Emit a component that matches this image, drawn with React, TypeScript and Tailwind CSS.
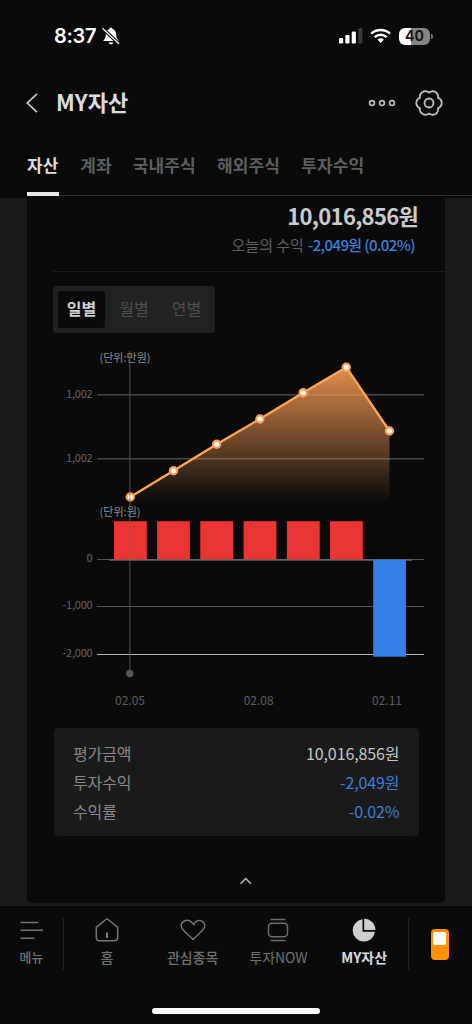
import React from 'react';

interface Point {
  x: number;
  y: number;
}

interface Bar {
  x: number;
  value: number;
}

const tabs = ['자산', '계좌', '국내주식', '해외주식', '투자수익'];

const periods = ['일별', '월별', '연별'];

const points: Point[] = [
  { x: 130.3, y: 497 },
  { x: 173.5, y: 470.7 },
  { x: 216.7, y: 444.3 },
  { x: 259.9, y: 419 },
  { x: 303.1, y: 392.7 },
  { x: 346.3, y: 367.3 },
  { x: 389.5, y: 431 },
];

const bars: Bar[] = [
  { x: 114, value: 809 },
  { x: 157.1, value: 809 },
  { x: 200.3, value: 809 },
  { x: 243.6, value: 809 },
  { x: 286.9, value: 809 },
  { x: 330, value: 809 },
  { x: 373.2, value: -2049 },
];

const summary = [
  { label: '평가금액', value: '10,016,856원', className: 'text-[#c4c6c8]' },
  { label: '투자수익', value: '-2,049원', className: 'text-[#3d7fdc]' },
  { label: '수익률', value: '-0.02%', className: 'text-[#3d7fdc]' },
];

// six-lobed outline of the settings icon
const gearOutline = Array.from({ length: 120 }, (_, i) => {
  const angle = (i * Math.PI) / 60;
  const radius = 10.4 + 2.3 * Math.abs(Math.cos(3 * angle)) ** 0.8;
  return `${(14 + radius * Math.cos(angle)).toFixed(2)},${(14 + radius * Math.sin(angle)).toFixed(2)}`;
}).join(' ');

const StatusBar: React.FC = () => (
  <div className="flex h-[72px] items-center justify-between pl-[54px] pr-[39px]">
    <div className="flex items-center gap-[5px]">
      <span className="w-[43px] whitespace-nowrap font-['Inter'] text-[20px] font-semibold leading-none tracking-[-0.3px] text-white">8:37</span>
      <svg width="18" height="18" viewBox="0 0 18 18">
        <path d="M9 .8c.8 0 1.4.5 1.5 1.2 2.3.7 3.7 2.7 3.7 5.2 0 3.5.8 4.5 2 5.6.6.7.3 1.3-.6 1.3H2.4c-.9 0-1.2-.6-.6-1.3 1.2-1.1 2-2.1 2-5.6 0-2.5 1.4-4.5 3.7-5.2C7.6 1.3 8.2.8 9 .8z" fill="#fff" />
        <path d="M6.6 15.4h4.8c-.3 1.1-1.2 1.8-2.4 1.8s-2.1-.7-2.4-1.8z" fill="#fff" />
        <path d="M1 1.7 16.7 16.5" stroke="#0a0a0a" strokeWidth="3.6" />
        <path d="M1 1.7 16.7 16.5" stroke="#fff" strokeWidth="1.3" strokeLinecap="round" />
      </svg>
    </div>
    <div className="flex items-center">
      <svg width="25" height="16" viewBox="0 0 25 16">
        <rect x="0" y="10" width="4.2" height="5.5" rx="1.2" fill="#fff" />
        <rect x="6.3" y="7" width="4.2" height="8.5" rx="1.2" fill="#fff" />
        <rect x="12.7" y="3.5" width="4.2" height="12" rx="1.2" fill="#fff" />
        <rect x="19.2" y="0" width="4.2" height="15.5" rx="1.2" fill="#3a3a3a" />
      </svg>
      <svg className="ml-[6px] mr-px" width="22" height="16" viewBox="0 0 22 16" fill="none" stroke="#fff" strokeWidth="2.5">
        <path d="M1.3 5.6a13.8 13.8 0 0 1 18.7 0" />
        <path d="M4.7 9.1a9 9 0 0 1 11.9 0" />
        <path d="M7.4 11.6a5 5 0 0 1 6.5 0L10.65 15z" fill="#fff" stroke="none" />
      </svg>
      <div className="ml-[6px] flex items-center gap-px">
        <div className="flex h-[17px] w-[31px] items-center justify-center rounded-[6px] bg-linear-to-r from-white from-40% to-[#848484] to-40% font-['Inter'] text-[14px] font-bold leading-none text-[#151515]">
          40
        </div>
        <div className="h-[5px] w-[2px] rounded-r-full bg-[#777]" />
      </div>
    </div>
  </div>
);

const Header: React.FC = () => (
  <header className="flex h-[62px] items-center pl-[26px] pr-[29px]">
    <svg width="12" height="20" viewBox="0 0 12 20" fill="none" stroke="#c8cacc" strokeWidth="1.7">
      <path d="M11 .8 1.3 10 11 19.2" />
    </svg>
    <h1 className="ml-[18px] whitespace-nowrap pb-[5px] text-[22px] font-bold leading-none tracking-[0.1px] text-[#dadcdf]">MY자산</h1>
    <svg className="ml-auto" width="28" height="8" viewBox="0 0 28 8" fill="none" stroke="#b9bbbd" strokeWidth="1.7">
      <circle cx="4" cy="4" r="2.4" />
      <circle cx="14" cy="4" r="2.4" />
      <circle cx="24" cy="4" r="2.4" />
    </svg>
    <svg className="ml-[19px]" width="28" height="28" viewBox="0 0 28 28" fill="none" stroke="#bfc1c3" strokeWidth="1.8" strokeLinejoin="round">
      <polygon points={gearOutline} />
      <circle cx="14" cy="14" r="4.5" />
    </svg>
  </header>
);

const TabBar: React.FC = () => (
  <nav className="mb-[2px] ml-[27px] flex h-[62px] gap-[21.2px] border-b border-[#2d2f2f]">
    {tabs.map((tab, index) => (
      <div
        key={tab}
        className={`flex h-[62px] items-center whitespace-nowrap text-[17px] font-bold leading-none tracking-[0.1px] ${
          index === 0 ? 'w-[32px] border-b-4 border-[#e4e6e9] pt-0.5 text-[#dadcdf]' : 'pb-0.5 text-[#5d5f60]'
        }`}
      >
        {tab}
      </div>
    ))}
  </nav>
);

const AssetChart: React.FC = () => {
  const line = points.map((p) => `${p.x},${p.y}`).join(' ');

  return (
    <svg className="block" width="418" height="379" viewBox="27 333 418 379">
      <defs>
        <linearGradient id="area" x1="0" y1="367" x2="0" y2="502" gradientUnits="userSpaceOnUse">
          <stop offset="0" stopColor="#ffa158" stopOpacity="0.88" />
          <stop offset="1" stopColor="#ffa158" stopOpacity="0" />
        </linearGradient>
      </defs>

      <path d="M97 394.7H424M97 458.7H424" stroke="#474747" strokeWidth="1.5" />
      <path d="M97 559.5H424M97 606.5H424" stroke="#555757" strokeWidth="1" />
      <path d="M97 654.5H424" stroke="#b4b6b6" strokeWidth="1" />
      <path d="M109.5 560H412" stroke="#666868" strokeWidth="1.6" />

      <polygon points={`${line} 389.5,502 130.3,502`} fill="url(#area)" />
      <polyline points={line} fill="none" stroke="#ffa656" strokeWidth="2.3" />
      {points.map((p) => (
        <circle key={p.x} cx={p.x} cy={p.y} r="3.6" fill="#fff" stroke="#ffa154" strokeWidth="2.2" />
      ))}

      {bars.map((bar) => (
        <rect
          key={bar.x}
          x={bar.x}
          y={bar.value > 0 ? 521.2 : 559.7}
          width="32.8"
          height={bar.value > 0 ? 38.2 : 97}
          fill={bar.value > 0 ? '#eb3434' : '#377fe8'}
        />
      ))}

      <g fontSize="11" fill="#626465" letterSpacing="-0.2">
        <text x="92.5" y="397.5" textAnchor="end">1,002</text>
        <text x="92.5" y="461.5" textAnchor="end">1,002</text>
        <text x="92.5" y="562" textAnchor="end">0</text>
        <text x="92.5" y="609" textAnchor="end">-1,000</text>
        <text x="92.5" y="657" textAnchor="end">-2,000</text>
      </g>
      <g fontSize="11" fill="#8b8d8e">
        <text x="99.5" y="362" textLength="51">(단위:만원)</text>
        <text x="99.5" y="516" textLength="41">(단위:원)</text>
      </g>
      <g fontSize="12" fill="#5c5e5f" textAnchor="middle">
        <text x="130" y="704.5">02.05</text>
        <text x="258.7" y="704.5">02.08</text>
        <text x="387" y="704.5">02.11</text>
      </g>

      <path d="M129.8 351V673" stroke="#686868" strokeOpacity="0.5" strokeWidth="1.5" />
      <circle cx="129.8" cy="673.5" r="3.7" fill="#555" />
    </svg>
  );
};

const AssetCard: React.FC = () => (
  <main className="flex h-[707px] justify-center bg-[#1a1a1a]">
    <section className="flex h-[705px] w-[418px] flex-col overflow-hidden rounded-b-[5px] bg-[#0a0a0a]">
      <div className="flex h-[73px] shrink-0 flex-col items-end pl-[26px]">
        <div className="mt-[6px] whitespace-nowrap pr-[27px] text-[22px] font-bold leading-[22px] tracking-[-0.7px] text-[#c9cbce]">10,016,856원</div>
        <div className="mt-[11px] flex gap-1 whitespace-nowrap pr-[30px] text-[15px] leading-[16px]">
          <span className="text-[#5e6061]">오늘의 수익</span>
          <span className="font-medium tracking-[-0.6px] text-[#3d7fdc]">-2,049원 (0.02%)</span>
        </div>
      </div>
      <div className="ml-[26px] h-px w-[392px] shrink-0 bg-[#1b1c1c]" />
      <div className="ml-[26px] mt-[14px] flex h-[47px] w-[162px] shrink-0 justify-between rounded-[3px] bg-[#202221] p-[5px]">
        {periods.map((period, index) => (
          <button
            key={period}
            className={`flex w-[47px] items-center justify-center whitespace-nowrap rounded-[3px] pb-[3px] text-[16px] leading-none ${
              index === 0 ? 'bg-[#0a0a0a] font-bold text-[#cfd1d4]' : 'text-[#4c4e4f]'
            }`}
          >
            {period}
          </button>
        ))}
      </div>
      <div className="shrink-0">
        <AssetChart />
      </div>
      <div className="ml-[27px] mt-[16px] flex h-[108px] w-[365px] shrink-0 flex-col justify-center rounded-[4px] bg-[#1a1a1a] pl-[19px] pr-[19.5px]">
        {summary.map((row) => (
          <div key={row.label} className="flex h-[29px] items-center justify-between whitespace-nowrap text-[16px] leading-none tracking-[-0.1px]">
            <span className="text-[#87898a]">{row.label}</span>
            <span className={row.className}>{row.value}</span>
          </div>
        ))}
      </div>
      <svg className="ml-[212px] mt-[41px] shrink-0" width="14" height="8" viewBox="0 0 14 8" fill="none" stroke="#b4b6b7" strokeWidth="1.5">
        <path d="M1.5 6.8 6.7 1.5l5.2 5.3" />
      </svg>
    </section>
  </main>
);

const BottomNav: React.FC = () => (
  <footer className="flex h-[119px] flex-col border-t border-[#1c1d1d]">
    <div className="mt-[12px] flex h-[52px]">
      <div className="flex w-[63px] flex-col items-center">
        <svg width="24" height="24" viewBox="0 0 24 24" stroke="#727475" strokeWidth="1.4">
          <path d="M.5 4.5H18M.5 12.3H23M.5 20.3h14" />
        </svg>
        <span className="mt-[8px] whitespace-nowrap text-[13px] font-medium leading-[14px] text-[#707273]">메뉴</span>
      </div>
      <div className="h-[52px] w-px bg-[#212323]" />
      <div className="flex flex-1 pr-px">
        <div className="flex flex-1 flex-col items-center">
          <svg width="24" height="24" viewBox="0 0 24 24" fill="none" stroke="#737576" strokeWidth="1.5">
            <path d="M1.3 9.3 10.9 1.5c.7-.5 1.5-.5 2.2 0l9.6 7.8v10.2c0 2-1.2 3.2-3.2 3.2h-15c-2 0-3.2-1.2-3.2-3.2z" strokeLinejoin="round" />
            <path d="M12 14.5V20" stroke="#aaa" />
          </svg>
          <span className="mt-[8px] whitespace-nowrap text-[14px] font-medium leading-[14px] tracking-[-0.2px] text-[#707273]">홈</span>
        </div>
        <div className="flex flex-1 flex-col items-center">
          <svg width="26" height="24" viewBox="0 0 26 24" fill="none" stroke="#737576" strokeWidth="1.5" strokeLinejoin="round">
            <path d="M14.6 7.3 11.5 4.3C9.3 1.8 5.3 1.6 2.8 4.1.8 6.2.7 9.5 3.2 12L13 21.5 22.8 12c2.5-2.5 2.4-5.8.4-7.9-2.2-2.2-5.8-2-8 0L14 5.2" />
          </svg>
          <span className="mt-[8px] whitespace-nowrap text-[14px] font-medium leading-[14px] tracking-[-0.1px] text-[#707273]">관심종목</span>
        </div>
        <div className="flex flex-1 flex-col items-center">
          <svg width="24" height="24" viewBox="0 0 24 24" fill="none" stroke="#696b6c" strokeWidth="1.5">
            <path d="M4.5 1.5h15M4.5 22.5h15" />
            <rect x="2.5" y="5.3" width="19" height="13.5" rx="3.5" />
          </svg>
          <span className="mt-[8px] whitespace-nowrap text-[14px] leading-[14px] tracking-[-0.1px] text-[#707273]">투자NOW</span>
        </div>
        <div className="flex flex-1 flex-col items-center">
          <svg width="24" height="24" viewBox="0 0 24 24" fill="#cfcfcf">
            <path d="M10.5 1.3V13.8H23A11.2 11.2 0 1 1 10.5 1.3z" />
            <path d="M12.2.7A11.3 11.3 0 0 1 23.4 12H12.2z" />
          </svg>
          <span className="mt-[8px] whitespace-nowrap text-[14px] font-bold leading-[14px] text-[#dadcdf]">MY자산</span>
        </div>
      </div>
      <div className="h-[52px] w-px bg-[#212323]" />
      <div className="flex w-[63px] items-center justify-center pr-[2px]">
        <div className="flex h-[31px] w-[18px] justify-center rounded-[4px] bg-[#ff9000] pt-[3px]">
          <div className="h-[13px] w-[13px] rounded-[2px] bg-white" />
        </div>
      </div>
    </div>
    <div className="mx-auto mt-[38px] h-[6px] w-[168px] rounded-full bg-white" />
  </footer>
);

const App: React.FC = () => {
  return (
    <div className="h-[1024px] w-[472px] overflow-hidden bg-[#0a0a0a] font-['Noto_Sans_CJK_KR',sans-serif]">
      <StatusBar />
      <Header />
      <TabBar />
      <AssetCard />
      <BottomNav />
    </div>
  );
};

export default App;
